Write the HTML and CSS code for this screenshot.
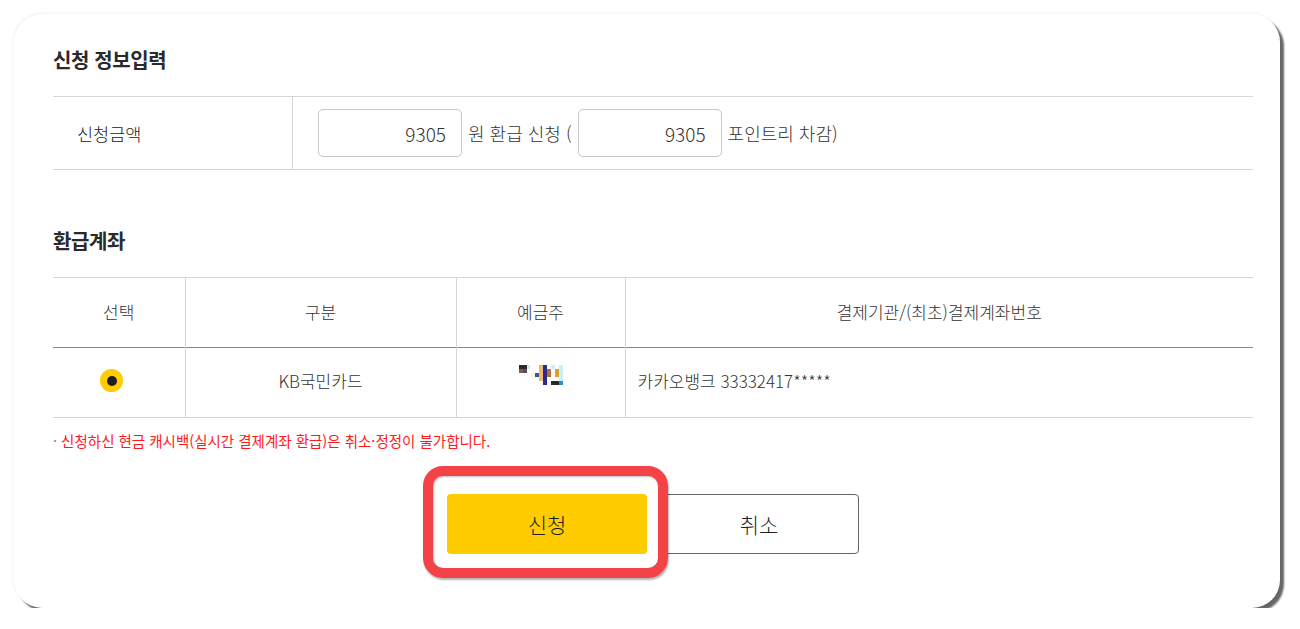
FILE: index.html
```html
<!DOCTYPE html>
<html lang="ko">
<head>
<meta charset="utf-8">
<title>환급 신청</title>
<link rel="stylesheet" href="styles.css">
</head>
<body>
<div class="card">
  <h2 class="sec-title">신청 정보입력</h2>
  <div class="info-row">
    <div class="info-label">신청금액</div>
    <div class="info-value">
      <div class="amount-input">9305</div>
      <span class="info-text">원 환급 신청 (</span>
      <div class="amount-input">9305</div>
      <span class="info-text">포인트리 차감)</span>
    </div>
  </div>

  <h2 class="sec-title sec-title-2">환급계좌</h2>
  <table class="acct">
    <colgroup>
      <col class="c1"><col class="c2"><col class="c3"><col class="c4">
    </colgroup>
    <thead>
      <tr><th>선택</th><th>구분</th><th>예금주</th><th>결제기관/(최초)결제계좌번호</th></tr>
    </thead>
    <tbody>
      <tr>
        <td class="center"><span class="radio"><span class="radio-dot"></span></span></td>
        <td class="center">KB국민카드</td>
        <td class="center">
          <svg class="mosaic" width="44" height="20" viewBox="0 0 44 20">
            <rect x="0" y="0" width="8" height="4" fill="#2a2a2a"/>
            <rect x="8" y="0" width="3" height="4" fill="#c8eef8"/>
            <rect x="0" y="4" width="4" height="4" fill="#8b5a3a"/>
            <rect x="4" y="4" width="4" height="4" fill="#5a4a6a"/>
            <rect x="12" y="8" width="4" height="4" fill="#f6f2de"/>
            <rect x="16" y="8" width="4" height="4" fill="#2a5aa0"/>
            <rect x="20" y="0" width="4" height="16" fill="#f0b870"/>
            <rect x="24" y="0" width="4" height="20" fill="#2a2a90"/>
            <rect x="28" y="4" width="4" height="8" fill="#b87038"/>
            <rect x="32" y="0" width="4" height="4" fill="#c8eef8"/>
            <rect x="36" y="4" width="4" height="8" fill="#d8a030"/>
            <rect x="32" y="16" width="8" height="4" fill="#2a2a2a"/>
            <rect x="40" y="0" width="4" height="16" fill="#c8eef8"/>
            <rect x="40" y="16" width="4" height="4" fill="#2a90d0"/>
          </svg>
        </td>
        <td class="left">카카오뱅크 33332417*****</td>
      </tr>
    </tbody>
  </table>

  <p class="notice"><span class="bullet">·</span> 신청하신 현금 캐시백(실시간 결제계좌 환급)은 취소·정정이 불가합니다.</p>

  <div class="btns">
    <div class="submit-wrap"><button class="btn btn-primary" type="button">신청</button></div>
    <button class="btn btn-cancel" type="button">취소</button>
  </div>
</div>
</body>
</html>
```

FILE: styles.css
```css
* { box-sizing: border-box; }
html, body { margin: 0; padding: 0; background: #fff; }
body {
  font-family: "Noto Sans CJK KR", "Noto Sans", sans-serif;
  font-weight: 300;
  color: #333;
  padding: 14px 0 0 14px;
}
.card {
  position: relative;
  width: 1266px;
  height: 594px;
  background: #fff;
  border-radius: 28px;
  padding: 34px 27px 0 39px;
  box-shadow: 4px 4px 2px rgba(0,0,0,0.6), -1px -1px 3px rgba(0,0,0,0.06);
  display: flex;
  flex-direction: column;
}
.sec-title {
  margin: 0;
  font-size: 20px;
  line-height: 24px;
  font-weight: 700;
  color: #2a2a2a;
  letter-spacing: -0.4px;
}
.sec-title-2 { margin-top: 59px; }

.info-row {
  margin-top: 24px;
  display: flex;
  border-top: 1px solid #d6d6d6;
  border-bottom: 1px solid #d6d6d6;
  height: 74px;
}
.info-label {
  width: 240px;
  border-right: 1px solid #d6d6d6;
  padding-left: 24px;
  display: flex;
  align-items: center;
  font-size: 17.5px;
  color: #222;
}
.info-value {
  display: flex;
  align-items: center;
  padding-left: 25px;
  gap: 6px;
}
.amount-input {
  width: 144px;
  height: 48px;
  border: 1px solid #c8c8c8;
  border-radius: 5px;
  display: flex;
  align-items: center;
  justify-content: flex-end;
  padding-right: 15px;
  font-size: 19px;
  color: #333;
}
.info-text { font-size: 18px; color: #333; }

.acct {
  margin-top: 24px;
  width: 1200px;
  border-collapse: collapse;
  table-layout: fixed;
  font-size: 17px;
}
.c1 { width: 132px; }
.c2 { width: 271px; }
.c3 { width: 169px; }
.c4 { width: 628px; }
.acct th, .acct td {
  height: 70px;
  padding: 0;
  border-left: 1px solid #d6d6d6;
  vertical-align: middle;
  color: #333;
}
.acct td { padding-bottom: 5px; }
.acct th:first-child, .acct td:first-child { border-left: 0; }
.acct thead tr { border-top: 1px solid #d6d6d6; border-bottom: 1px solid #888; }
.acct tbody tr { border-bottom: 1px solid #d6d6d6; }
.acct th { font-weight: 300; text-align: center; padding-bottom: 2px; }
.center { text-align: center; }
.left { text-align: left; padding-left: 12px !important; }

.radio {
  display: inline-flex;
  align-items: center;
  justify-content: center;
  width: 23px;
  height: 23px;
  border-radius: 50%;
  background: #ffcc00;
  margin-right: 14px;
  vertical-align: middle;
  position: relative;
  top: -1px;
}
.radio-dot {
  width: 10px;
  height: 10px;
  border-radius: 50%;
  background: #1e1e1e;
}
.mosaic { display: inline-block; vertical-align: middle; margin-top: -16px; }

.notice {
  margin: 14px 0 0 0;
  font-size: 14.5px;
  line-height: 18px;
  color: #ff1a1a;
  font-weight: 400;
}
.bullet { color: #888; }

.btns {
  margin-top: 44px;
  display: flex;
  justify-content: center;
  gap: 12px;
}
.submit-wrap { position: relative; }
.submit-wrap::after {
  content: "";
  position: absolute;
  left: -24px;
  top: -28px;
  right: -21px;
  bottom: -24px;
  border: 10px solid #f44346;
  border-radius: 20px;
  box-shadow: 1px 2px 2px rgba(0,0,0,0.3), inset 1px 1px 2px rgba(0,0,0,0.25);
  pointer-events: none;
}
.btn {
  width: 200px;
  height: 60px;
  border-radius: 4px;
  font-family: "Noto Sans CJK KR", "Noto Sans", sans-serif;
  font-weight: 300;
  font-size: 21px;
  color: #222;
  cursor: pointer;
}
.btn-primary { background: #ffcc00; border: 0; display: block; }
.btn-cancel { background: #fff; border: 1px solid #666; }
```
